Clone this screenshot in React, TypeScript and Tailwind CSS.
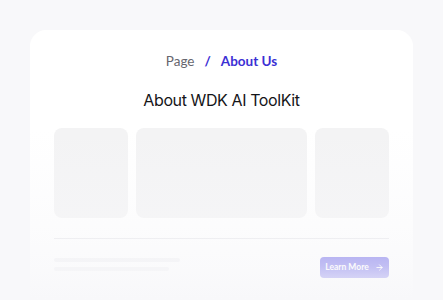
import { ArrowRight } from 'lucide-react';

const font = { fontFamily: 'Lato, Inter, "Noto Sans", sans-serif' };

export default function App() {
    return (
        <div className="relative w-[443px] h-[300px] overflow-hidden bg-[#f8f8fa]" style={font}>
            <div className="mx-[30px] mt-[30px] h-[300px] rounded-2xl bg-white px-6 pt-[21px]">
                {/* Breadcrumb */}
                <div className="flex items-center justify-center gap-[10px] text-[13.5px] leading-[20px]">
                    <span className="text-[#66666e]">Page</span>
                    <span className="font-bold text-[#3b30d4]">/</span>
                    <span className="font-bold text-[#3b30d4]">About Us</span>
                </div>

                <h1 className="mt-[18px] text-center text-[16px] leading-[22px] font-normal tracking-[-0.4px] text-[#151518]" style={{ fontFamily: 'Inter, Lato, sans-serif' }}>
                    About WDK AI ToolKit
                </h1>

                {/* Feature tiles */}
                <div className="mt-[17px] grid grid-cols-[74px_1fr_74px] gap-2 h-[90px]">
                    <div className="rounded-lg bg-[#f3f3f4]" />
                    <div className="rounded-lg bg-[#f3f3f4]" />
                    <div className="rounded-lg bg-[#f3f3f4]" />
                </div>

                <div className="mt-5 border-t border-[#e4e4e8]" />

                <div className="mt-[18px] flex items-start justify-between">
                    <div className="flex flex-col gap-[5px] pt-[1px]">
                        <div className="h-1 w-[126px] rounded-full bg-[#eeeef1]" />
                        <div className="h-1 w-[115px] rounded-full bg-[#eeeef1]" />
                    </div>
                    <button className="flex h-[21px] w-[69px] items-center justify-center gap-[6px] rounded bg-[#4f46e5] text-[8.5px] font-bold text-white">
                        Learn More <ArrowRight className="h-[9px] w-[9px]" strokeWidth={2.5} />
                    </button>
                </div>
            </div>

            {/* fade-out overlay */}
            <div className="pointer-events-none absolute inset-x-0 top-[130px] bottom-0 bg-[linear-gradient(to_bottom,rgba(248,248,250,0)_0%,rgba(248,248,250,0.42)_55%,rgba(248,248,250,0.68)_80%,rgba(248,248,250,1)_100%)]" />
        </div>
    );
}
